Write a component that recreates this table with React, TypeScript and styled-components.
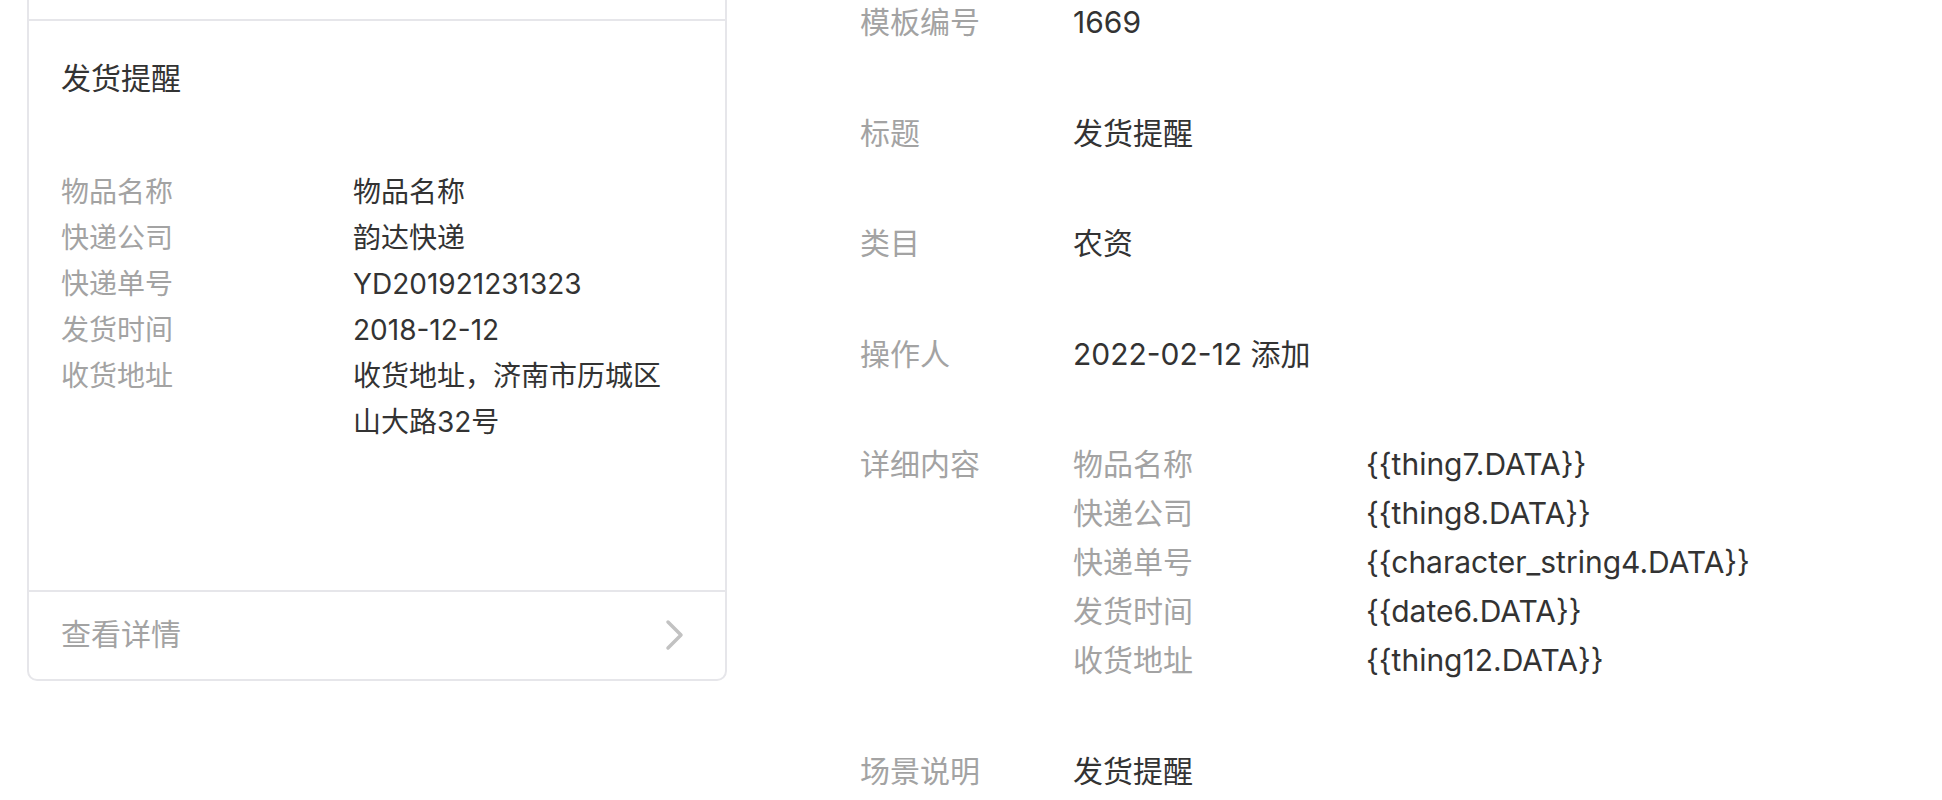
import React from 'react';
import styled, { createGlobalStyle } from 'styled-components';

const GlobalStyle = createGlobalStyle`
  html, body {
    margin: 0;
    padding: 0;
    background: #ffffff;
    overflow: hidden;
  }
  body {
    font-family: "Inter", "Noto Sans CJK SC", sans-serif;
    color: #333333;
  }
`;

const Page = styled.div`
  display: flex;
  align-items: flex-start;
  gap: 133px;
  padding-left: 27px;
  height: 800px;
  overflow: hidden;
`;

const Card = styled.div`
  width: 700px;
  box-sizing: border-box;
  margin-top: -100px;
  border: 2px solid #e6e6ea;
  border-radius: 10px;
  background: #fff;
  flex-shrink: 0;
`;

const CardHead = styled.div`
  height: 117px;
  border-bottom: 2px solid #e6e6ea;
`;

const CardBody = styled.div`
  padding: 35px 40px 145px 32px;
`;

const CardTitle = styled.div`
  font-size: 30px;
  line-height: 44px;
  color: #333;
`;

const InfoList = styled.div`
  margin-top: 69px;
  display: flex;
  flex-direction: column;
`;

const InfoRow = styled.div`
  display: flex;
  font-size: 28px;
  line-height: 46px;
`;

const InfoLabel = styled.div`
  width: 292px;
  flex-shrink: 0;
  color: #a3a3a3;
`;

const InfoValue = styled.div`
  flex: 1;
  color: #333;
  word-break: break-all;
`;

const CardFoot = styled.div`
  display: flex;
  align-items: center;
  justify-content: space-between;
  height: 80px;
  padding: 0 40px 7px 32px;
  border-top: 2px solid #e6e6ea;
  font-size: 30px;
  color: #a3a3a3;
`;

const Chevron = styled.svg`
  width: 20px;
  height: 32px;
  margin-top: 5px;
`;

const Detail = styled.div`
  margin-top: -2px;
  display: flex;
  flex-direction: column;
  gap: 61.5px;
`;

const DetailRow = styled.div`
  display: flex;
  font-size: 30px;
  line-height: 49px;
`;

const DetailLabel = styled.div`
  width: 213px;
  flex-shrink: 0;
  color: #a3a3a3;
`;

const DetailValue = styled.div`
  color: #333;
  white-space: nowrap;
`;

const FieldGrid = styled.div`
  display: grid;
  grid-template-columns: 293px auto;
`;

const FieldName = styled.div`
  color: #a3a3a3;
`;

const FieldKey = styled.div`
  color: #333;
  white-space: nowrap;
`;

const cardInfo = [
  ['物品名称', '物品名称'],
  ['快递公司', '韵达快递'],
  ['快递单号', 'YD201921231323'],
  ['发货时间', '2018-12-12'],
  ['收货地址', '收货地址，济南市历城区山大路32号'],
];

const fields = [
  ['物品名称', '{{thing7.DATA}}'],
  ['快递公司', '{{thing8.DATA}}'],
  ['快递单号', '{{character_string4.DATA}}'],
  ['发货时间', '{{date6.DATA}}'],
  ['收货地址', '{{thing12.DATA}}'],
];

export default function App() {
  return (
    <>
      <GlobalStyle />
      <Page>
        <Card>
          <CardHead />
          <CardBody>
            <CardTitle>发货提醒</CardTitle>
            <InfoList>
              {cardInfo.map(([label, value]) => (
                <InfoRow key={label}>
                  <InfoLabel>{label}</InfoLabel>
                  <InfoValue>{value}</InfoValue>
                </InfoRow>
              ))}
            </InfoList>
          </CardBody>
          <CardFoot>
            <span>查看详情</span>
            <Chevron viewBox="0 0 20 32">
              <path d="M3 3 L16 16 L3 29" fill="none" stroke="#c2c2c2" strokeWidth="3.5" strokeLinecap="round" strokeLinejoin="round" />
            </Chevron>
          </CardFoot>
        </Card>

        <Detail>
          <DetailRow>
            <DetailLabel>模板编号</DetailLabel>
            <DetailValue>1669</DetailValue>
          </DetailRow>
          <DetailRow>
            <DetailLabel>标题</DetailLabel>
            <DetailValue>发货提醒</DetailValue>
          </DetailRow>
          <DetailRow>
            <DetailLabel>类目</DetailLabel>
            <DetailValue>农资</DetailValue>
          </DetailRow>
          <DetailRow>
            <DetailLabel>操作人</DetailLabel>
            <DetailValue>2022-02-12 添加</DetailValue>
          </DetailRow>
          <DetailRow>
            <DetailLabel>详细内容</DetailLabel>
            <FieldGrid>
              {fields.map(([name, key]) => (
                <React.Fragment key={name}>
                  <FieldName>{name}</FieldName>
                  <FieldKey>{key}</FieldKey>
                </React.Fragment>
              ))}
            </FieldGrid>
          </DetailRow>
          <DetailRow>
            <DetailLabel>场景说明</DetailLabel>
            <DetailValue>发货提醒</DetailValue>
          </DetailRow>
        </Detail>
      </Page>
    </>
  );
}
